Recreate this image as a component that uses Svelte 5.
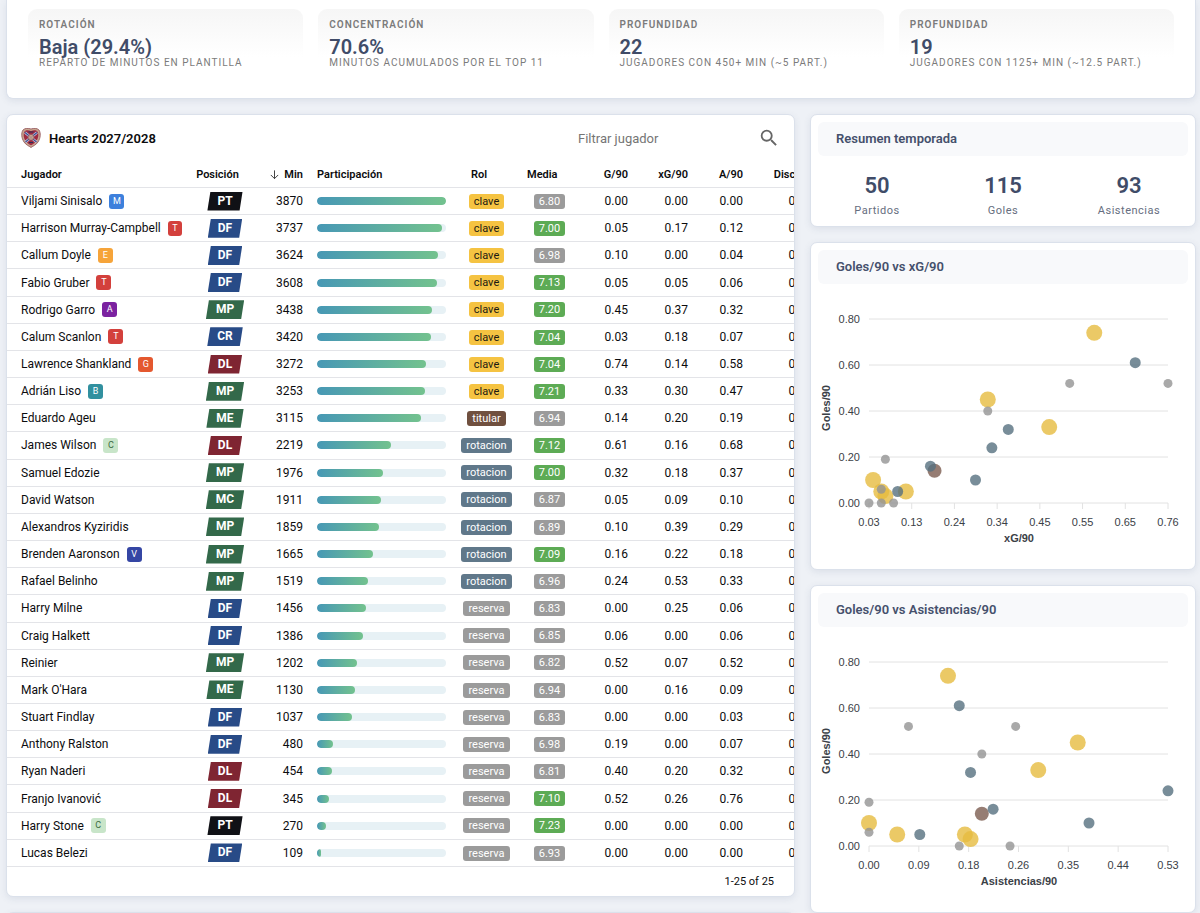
<script lang="ts">
    type Player = {
        name: string;
        tag?: string;
        pos: string;
        min: number;
        role: string;
        rating: string;
        g: number;
        xg: number;
        a: number;
    };

    const stats = [
        { label: "Rotación", value: "Baja (29.4%)", note: "Reparto de minutos en plantilla" },
        { label: "Concentración", value: "70.6%", note: "Minutos acumulados por el top 11" },
        { label: "Profundidad", value: "22", note: "Jugadores con 450+ min (~5 part.)" },
        { label: "Profundidad", value: "19", note: "Jugadores con 1125+ min (~12.5 part.)" },
    ];

    const totals = [
        { value: 50, label: "Partidos" },
        { value: 115, label: "Goles" },
        { value: 93, label: "Asistencias" },
    ];

    const columns = [
        { label: "Jugador", align: "left" },
        { label: "Posición", align: "center" },
        { label: "Min", align: "right", sorted: true },
        { label: "Participación", align: "left" },
        { label: "Rol", align: "center" },
        { label: "Media", align: "center" },
        { label: "G/90", align: "right" },
        { label: "xG/90", align: "right" },
        { label: "A/90", align: "right" },
        { label: "Disc/90", align: "right" },
    ];

    const rows: [string, string, string, number, string, string, number, number, number][] = [
        ["Viljami Sinisalo", "M", "PT", 3870, "clave", "6.80", 0, 0, 0],
        ["Harrison Murray-Campbell", "T", "DF", 3737, "clave", "7.00", 0.05, 0.17, 0.12],
        ["Callum Doyle", "E", "DF", 3624, "clave", "6.98", 0.1, 0, 0.04],
        ["Fabio Gruber", "T", "DF", 3608, "clave", "7.13", 0.05, 0.05, 0.06],
        ["Rodrigo Garro", "A", "MP", 3438, "clave", "7.20", 0.45, 0.37, 0.32],
        ["Calum Scanlon", "T", "CR", 3420, "clave", "7.04", 0.03, 0.18, 0.07],
        ["Lawrence Shankland", "G", "DL", 3272, "clave", "7.04", 0.74, 0.14, 0.58],
        ["Adrián Liso", "B", "MP", 3253, "clave", "7.21", 0.33, 0.3, 0.47],
        ["Eduardo Ageu", "", "ME", 3115, "titular", "6.94", 0.14, 0.2, 0.19],
        ["James Wilson", "C", "DL", 2219, "rotacion", "7.12", 0.61, 0.16, 0.68],
        ["Samuel Edozie", "", "MP", 1976, "rotacion", "7.00", 0.32, 0.18, 0.37],
        ["David Watson", "", "MC", 1911, "rotacion", "6.87", 0.05, 0.09, 0.1],
        ["Alexandros Kyziridis", "", "MP", 1859, "rotacion", "6.89", 0.1, 0.39, 0.29],
        ["Brenden Aaronson", "V", "MP", 1665, "rotacion", "7.09", 0.16, 0.22, 0.18],
        ["Rafael Belinho", "", "MP", 1519, "rotacion", "6.96", 0.24, 0.53, 0.33],
        ["Harry Milne", "", "DF", 1456, "reserva", "6.83", 0, 0.25, 0.06],
        ["Craig Halkett", "", "DF", 1386, "reserva", "6.85", 0.06, 0, 0.06],
        ["Reinier", "", "MP", 1202, "reserva", "6.82", 0.52, 0.07, 0.52],
        ["Mark O'Hara", "", "ME", 1130, "reserva", "6.94", 0, 0.16, 0.09],
        ["Stuart Findlay", "", "DF", 1037, "reserva", "6.83", 0, 0, 0.03],
        ["Anthony Ralston", "", "DF", 480, "reserva", "6.98", 0.19, 0, 0.07],
        ["Ryan Naderi", "", "DL", 454, "reserva", "6.81", 0.4, 0.2, 0.32],
        ["Franjo Ivanović", "", "DL", 345, "reserva", "7.10", 0.52, 0.26, 0.76],
        ["Harry Stone", "C", "PT", 270, "reserva", "7.23", 0, 0, 0],
        ["Lucas Belezi", "", "DF", 109, "reserva", "6.93", 0, 0, 0],
    ];

    const players: Player[] = rows.map(([name, tag, pos, min, role, rating, g, xg, a]) => ({
        name, tag, pos, min, role, rating, g, xg, a,
    }));
    const maxMin = players[0].min;

    let query = $state("");
    const filtered = $derived(
        players.filter((p) => p.name.toLowerCase().includes(query.toLowerCase())),
    );

    const radius: Record<string, number> = { clave: 8, titular: 7, rotacion: 5.5, reserva: 4.5 };

    const charts = [
        {
            title: "Goles/90 vs xG/90",
            axis: "xG/90",
            field: "a" as const,
            ticks: ["0.03", "0.13", "0.24", "0.34", "0.45", "0.55", "0.65", "0.76"],
        },
        {
            title: "Goles/90 vs Asistencias/90",
            axis: "Asistencias/90",
            field: "xg" as const,
            ticks: ["0.00", "0.09", "0.18", "0.26", "0.35", "0.44", "0.53"],
        },
    ];
    const yTicks = [0.8, 0.6, 0.4, 0.2, 0];

    // plot area inside the 370x285 viewBox
    const left = 51;
    const right = 350;
    const top = 35;
    const bottom = 219;

    function scaleX(v: number, ticks: string[]) {
        const lo = Number(ticks[0]);
        const hi = Number(ticks[ticks.length - 1]);
        return left + ((v - lo) / (hi - lo)) * (right - left);
    }

    function scaleY(v: number) {
        return bottom - (v / 0.8) * (bottom - top);
    }
</script>

<main>
    <section class="card stats">
        {#each stats as s}
            <div class="stat">
                <span class="stat-label">{s.label}</span>
                <strong>{s.value}</strong>
                <span class="stat-note">{s.note}</span>
            </div>
        {/each}
    </section>

    <div class="layout">
        <div class="stack">
            <section class="card squad">
                <header>
                    <svg class="crest" viewBox="0 0 20 20" aria-hidden="true">
                        <path d="M10 1C7 0 4 0 2 2C0 5 .4 10 3 14C5 17 8 18 10 19.500C12 18 15 17 17 14C19.600 10 20 5 18 2C16 0 13 0 10 1Z" fill="#c9a58f" stroke="#8f5058" stroke-width=".8" />
                        <path d="M10 3C7 1.700 4.800 2 3.500 3.500C2 6 2.500 10 4.500 13C6 15 8 16.200 10 17.300C12 16.200 14 15 15.500 13C17.500 10 18 6 16.500 3.500C15.200 2 13 1.700 10 3Z" fill="#9e2a42" />
                        <path d="M4 4.500L15.500 14M16 4.500L4.500 14" stroke="#c5cbe3" stroke-width="2.600" />
                        <path d="M4 4.500L15.500 14M16 4.500L4.500 14" stroke="#3d4d92" stroke-width="1.200" />
                        <circle cx="10" cy="9.300" r="3" fill="#cfa486" stroke="#8b4654" stroke-width=".6" />
                        <path d="M7.500 4h5M8 14.500h4" stroke="#2c2f55" stroke-width="1.200" />
                    </svg>
                    <h2>Hearts 2027/2028</h2>
                    <label class="search">
                        <input type="text" placeholder="Filtrar jugador" aria-label="Filtrar jugador" bind:value={query} />
                        <svg viewBox="0 0 24 24" aria-hidden="true">
                            <path d="M15.500 14h-.79l-.28-.27A6.471 6.471 0 0 0 16 9.500 6.500 6.500 0 1 0 9.500 16c1.610 0 3.090-.59 4.230-1.570l.27.28v.79l5 4.990L20.490 19l-4.990-5zm-6 0C7.010 14 5 11.990 5 9.500S7.010 5 9.500 5 14 7.010 14 9.500 11.990 14 9.500 14z" />
                        </svg>
                    </label>
                </header>

                <div class="scroll">
                    <table class:full={filtered.length === players.length}>
                        <colgroup>
                            <col class="c-name" />
                            <col class="c-pos" />
                            <col class="c-min" />
                            <col class="c-bar" />
                            <col class="c-role" />
                            <col class="c-media" />
                            <col class="c-g" />
                            <col class="c-xg" />
                            <col class="c-a" />
                            <col class="c-disc" />
                        </colgroup>
                        <thead>
                            <tr>
                                {#each columns as c}
                                    <th class={c.align} aria-sort={c.sorted ? "descending" : "none"}>
                                        <button type="button">
                                            {c.label}
                                            <svg class:on={c.sorted} viewBox="0 0 12 12" aria-hidden="true">
                                                <path d="M6 1.500v9M2 6.500l4 4 4-4" />
                                            </svg>
                                        </button>
                                    </th>
                                {/each}
                            </tr>
                        </thead>
                        <tbody>
                            {#each filtered as p (p.name)}
                                <tr>
                                    <td>
                                        <span class="name">
                                            {p.name}
                                            {#if p.tag}<span class="tag tag-{p.tag}">{p.tag}</span>{/if}
                                        </span>
                                    </td>
                                    <td class="center"><span class="pos pos-{p.pos}">{p.pos}</span></td>
                                    <td class="right">{p.min}</td>
                                    <td>
                                        <div class="track">
                                            <div class="fill" style:width="{(p.min / maxMin) * 100}%"></div>
                                        </div>
                                    </td>
                                    <td class="center"><span class="chip {p.role}">{p.role}</span></td>
                                    <td class="center">
                                        <span class="chip {Number(p.rating) >= 7 ? 'good' : 'plain'}">{p.rating}</span>
                                    </td>
                                    <td class="right">{p.g.toFixed(2)}</td>
                                    <td class="right">{p.xg.toFixed(2)}</td>
                                    <td class="right">{p.a.toFixed(2)}</td>
                                    <td class="right">0.00</td>
                                </tr>
                            {/each}
                        </tbody>
                    </table>
                </div>
                <footer>1-{filtered.length} of {filtered.length}</footer>
            </section>
            <section class="card next"></section>
        </div>

        <aside class="stack">
            <section class="card panel">
                <h3>Resumen temporada</h3>
                <div class="totals">
                    {#each totals as t}
                        <div>
                            <strong>{t.value}</strong>
                            <span>{t.label}</span>
                        </div>
                    {/each}
                </div>
            </section>

            {#each charts as chart}
                <section class="card panel">
                    <h3>{chart.title}</h3>
                    <svg class="chart" viewBox="0 0 370 285" role="img" aria-label={chart.title}>
                        {#each yTicks as t}
                            <line x1={left} x2={right} y1={scaleY(t)} y2={scaleY(t)} />
                            <text x="42" y={scaleY(t) + 4} text-anchor="end">{t.toFixed(2)}</text>
                        {/each}
                        {#each chart.ticks as t, i}
                            {@const x = left + (i * (right - left)) / (chart.ticks.length - 1)}
                            <line x1={x} x2={x} y1={bottom} y2={bottom + 6} />
                            <text {x} y="242" text-anchor="middle">{t}</text>
                        {/each}
                        <text class="axis" x="201" y="258" text-anchor="middle">{chart.axis}</text>
                        <text class="axis" transform="translate(12 124) rotate(-90)" text-anchor="middle">Goles/90</text>
                        {#each players.filter((p) => p.g > 0 || p[chart.field] > 0) as p}
                            <circle
                                class="dot-{p.role}"
                                cx={scaleX(p[chart.field], chart.ticks)}
                                cy={scaleY(p.g)}
                                r={radius[p.role]}
                            />
                        {/each}
                    </svg>
                </section>
            {/each}
        </aside>
    </div>
</main>

<style>
    :global(body) {
        margin: 0;
        background: #eef1f6;
        scrollbar-width: none;
    }

    :global(html) {
        scrollbar-width: none;
    }

    main {
        padding: 0 4px 0 6px;
        font-family: Roboto, "Liberation Sans", sans-serif;
        font-size: 12px;
        color: #0c0c0e;
    }

    .card {
        box-sizing: border-box;
        background: #fff;
        border: 1px solid #dbe1eb;
        border-radius: 7px;
        box-shadow: 0 2px 7px rgba(60, 80, 120, 0.1);
    }

    .stats {
        display: grid;
        grid-template-columns: repeat(4, minmax(0, 1fr));
        gap: 15px;
        padding: 9px 21px 26px;
        border-top: 0;
        border-radius: 0 0 7px 7px;
        margin-bottom: 15px;
    }

    .stat {
        display: flex;
        flex-direction: column;
        padding: 9px 11px 0;
        border-radius: 9px;
        background: linear-gradient(#f6f6f6, #fff 48px);
        white-space: nowrap;
    }

    .stat-label {
        font-size: 10px;
        line-height: 14px;
        font-weight: 600;
        letter-spacing: 1px;
        text-transform: uppercase;
        color: #7b7b7b;
    }

    .stat strong {
        font-size: 20px;
        line-height: 24px;
        margin-top: 3px;
        font-weight: 600;
        color: #404c68;
    }

    .stat-note {
        font-size: 10px;
        line-height: 12px;
        margin-top: -2px;
        padding-bottom: 3px;
        letter-spacing: 1px;
        text-transform: uppercase;
        color: #7b7b7b;
    }

    .layout {
        display: grid;
        grid-template-columns: minmax(0, 789fr) minmax(0, 386fr);
        gap: 15px;
        align-items: start;
    }

    .stack {
        display: flex;
        flex-direction: column;
        gap: 15px;
    }

    .squad {
        overflow: hidden;
    }

    .squad header {
        display: flex;
        align-items: center;
        height: 46px;
        padding: 0 16px 0 14px;
    }

    .crest {
        width: 20px;
        height: 20px;
        margin-right: 8px;
    }

    h2 {
        margin: 0;
        font-size: 13px;
        font-weight: 600;
    }

    .search {
        display: flex;
        align-items: center;
        width: 200px;
        margin-left: auto;
    }

    .search input {
        flex: 1;
        min-width: 0;
        padding: 0;
        border: 0;
        outline: 0;
        font: inherit;
        font-size: 13px;
        background: none;
    }

    .search input::placeholder {
        color: #757575;
    }

    .search svg {
        width: 22px;
        height: 22px;
        margin-right: -2px;
        fill: #666;
    }

    .scroll {
        overflow-x: auto;
        scrollbar-width: none;
    }

    table {
        width: 100%;
        min-width: 812px;
        table-layout: fixed;
        border-collapse: separate;
        border-spacing: 0;
    }

    table.full {
        height: 706px;
    }

    .c-name { width: 182px; }
    .c-pos { width: 72px; }
    .c-min { width: 49px; }
    .c-bar { width: 143px; }
    .c-role { width: 67px; }
    .c-media { width: 59px; }
    .c-g { width: 56px; }
    .c-xg { width: 60px; }
    .c-a { width: 55px; }
    .c-disc { width: 69px; }

    th,
    td {
        height: 26px;
        padding: 0 7px;
        border-bottom: 1px solid #e3e4e8;
        text-align: left;
        white-space: nowrap;
    }

    th:first-child,
    td:first-child {
        padding-left: 14px;
    }

    th button {
        display: inline-flex;
        align-items: center;
        gap: 4px;
        padding: 0;
        border: 0;
        background: none;
        font: inherit;
        font-size: 11px;
        font-weight: 600;
        color: inherit;
        cursor: pointer;
    }

    th svg {
        width: 11px;
        height: 11px;
        fill: none;
        stroke: #333;
        visibility: hidden;
    }

    th svg.on {
        visibility: visible;
    }

    .center {
        text-align: center;
    }

    .right {
        text-align: right;
    }

    /* puts the sort arrow before the label */
    th.right {
        direction: rtl;
        text-align: start;
    }

    .name {
        display: flex;
        align-items: center;
        gap: 7px;
    }

    .tag {
        width: 15px;
        border-radius: 3px;
        font-size: 9px;
        line-height: 15px;
        text-align: center;
        color: #fff;
    }

    .tag-M { background: #3d80dc; }
    .tag-T { background: #d3403c; }
    .tag-E { background: #f6a43a; }
    .tag-A { background: #7b22a0; }
    .tag-G { background: #e4582f; }
    .tag-B { background: #31909f; }
    .tag-C { background: #c8e5c9; color: #3a6a3f; }
    .tag-V { background: #3546a4; }

    .pos {
        display: inline-block;
        padding: 0 10px;
        font-weight: 700;
        line-height: 19px;
        color: #fff;
        vertical-align: middle;
        background: #33694a;
        clip-path: polygon(3px 0, 100% 0, calc(100% - 3px) 100%, 0 100%);
    }

    .pos-PT { background: #101116; }
    .pos-DF,
    .pos-CR { background: #284b87; }
    .pos-DL { background: #7f2532; }

    .track {
        height: 8px;
        border-radius: 4px;
        background: #e7f1f5;
        overflow: hidden;
    }

    .fill {
        height: 100%;
        border-radius: 4px;
        background: linear-gradient(90deg, #4798b5, #73c28e);
    }

    .chip {
        display: inline-block;
        padding: 0 5px;
        border-radius: 3px;
        font-size: 11px;
        line-height: 15px;
        vertical-align: middle;
        color: #fff;
    }

    .clave { background: #f5c342; color: #1c1a12; }
    .titular { background: #70503f; }
    .rotacion { background: #60788a; }
    .reserva,
    .plain { background: #9b9b9b; }
    .good { background: #5dab55; }

    footer {
        padding: 0 20px;
        font-size: 11px;
        line-height: 29px;
        text-align: right;
    }

    .next {
        min-height: 20px;
    }

    .panel {
        padding: 7px 7px 0;
    }

    h3 {
        margin: 0;
        padding: 0 18px;
        border-radius: 6px;
        font-size: 13px;
        line-height: 34px;
        font-weight: 600;
        color: #45506c;
        background: #f8f9fb;
    }

    .totals {
        display: grid;
        grid-template-columns: repeat(3, 1fr);
        padding: 17px 0 8px;
        margin: 0 -4px;
        text-align: center;
    }

    .totals strong {
        display: block;
        font-size: 22px;
        line-height: 26px;
        font-weight: 600;
        color: #404c68;
    }

    .totals span {
        display: block;
        margin-top: 4px;
        font-size: 11px;
        line-height: 15px;
        letter-spacing: 0.5px;
        color: #666e80;
    }

    .chart {
        display: block;
        width: 100%;
        font-family: "Liberation Sans", Arial, sans-serif;
        font-size: 11px;
        fill: #3b4147;
    }

    .chart line {
        stroke: #e2e2e2;
    }

    .axis {
        font-weight: 700;
    }

    circle {
        fill-opacity: 0.8;
    }

    .dot-clave { fill: #e6bb40; }
    .dot-titular { fill: #7c5c50; }
    .dot-rotacion { fill: #56707f; }
    .dot-reserva { fill: #949494; }
</style>
